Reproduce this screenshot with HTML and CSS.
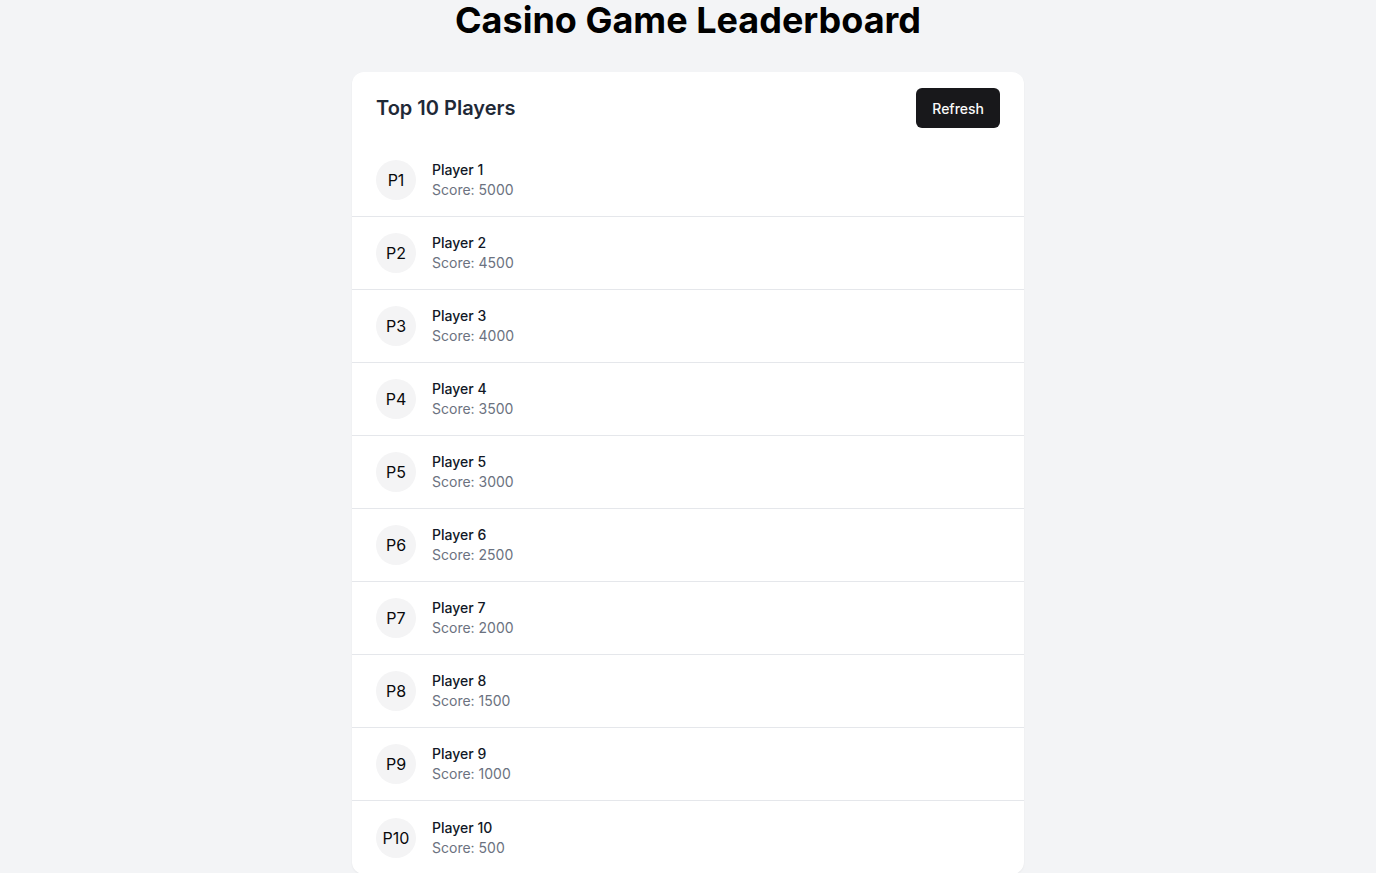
FILE: index.html
```html
<!DOCTYPE html>
<html lang="en">
<head>
<meta charset="utf-8">
<title>Casino Game Leaderboard</title>
<link rel="stylesheet" href="styles.css">
</head>
<body>
<main class="page">
  <h1 class="title">Casino Game Leaderboard</h1>
  <section class="card">
    <header class="card-header">
      <h2 class="card-title">Top 10 Players</h2>
      <button class="btn" type="button">Refresh</button>
    </header>
    <ul class="list">
      <li class="row"><span class="avatar">P1</span><div class="info"><span class="name">Player 1</span><span class="score">Score: 5000</span></div></li>
      <li class="row"><span class="avatar">P2</span><div class="info"><span class="name">Player 2</span><span class="score">Score: 4500</span></div></li>
      <li class="row"><span class="avatar">P3</span><div class="info"><span class="name">Player 3</span><span class="score">Score: 4000</span></div></li>
      <li class="row"><span class="avatar">P4</span><div class="info"><span class="name">Player 4</span><span class="score">Score: 3500</span></div></li>
      <li class="row"><span class="avatar">P5</span><div class="info"><span class="name">Player 5</span><span class="score">Score: 3000</span></div></li>
      <li class="row"><span class="avatar">P6</span><div class="info"><span class="name">Player 6</span><span class="score">Score: 2500</span></div></li>
      <li class="row"><span class="avatar">P7</span><div class="info"><span class="name">Player 7</span><span class="score">Score: 2000</span></div></li>
      <li class="row"><span class="avatar">P8</span><div class="info"><span class="name">Player 8</span><span class="score">Score: 1500</span></div></li>
      <li class="row"><span class="avatar">P9</span><div class="info"><span class="name">Player 9</span><span class="score">Score: 1000</span></div></li>
      <li class="row"><span class="avatar">P10</span><div class="info"><span class="name">Player 10</span><span class="score">Score: 500</span></div></li>
    </ul>
  </section>
</main>
</body>
</html>
```
FILE: styles.css
```css
* { box-sizing: border-box; }
html, body { margin: 0; padding: 0; }
body {
  background: #f3f4f6;
  font-family: Inter, "Noto Sans", sans-serif;
  color: #09090b;
}
.page {
  display: flex;
  flex-direction: column;
  align-items: center;
  padding-bottom: 32px;
}
.title {
  margin: 0 0 32px;
  font-size: 36px;
  line-height: 40px;
  font-weight: 700;
  color: #000;
}
.card {
  width: 672px;
  background: #fff;
  border-radius: 12px;
  box-shadow: 0 1px 2px rgba(0,0,0,0.05);
  overflow: hidden;
}
.card-header {
  display: flex;
  justify-content: space-between;
  align-items: center;
  padding: 16px 24px;
}
.card-title {
  margin: 0;
  font-size: 20px;
  line-height: 28px;
  font-weight: 600;
  color: #1f2937;
}
.btn {
  height: 40px;
  padding: 0 16px;
  border: 0;
  border-radius: 6px;
  background: #18181b;
  color: #fafafa;
  font-family: inherit;
  font-size: 14px;
  font-weight: 500;
}
.list { list-style: none; margin: 0; padding: 0; }
.row {
  display: flex;
  align-items: center;
  gap: 16px;
  height: 73px;
  padding: 16px 24px;
  border-bottom: 1px solid #e5e7eb;
}
.row:last-child { border-bottom: 0; }
.avatar {
  width: 40px;
  height: 40px;
  border-radius: 50%;
  background: #f4f4f5;
  display: flex;
  align-items: center;
  justify-content: center;
  font-size: 16px;
  color: #09090b;
  flex-shrink: 0;
}
.info { display: flex; flex-direction: column; }
.name { font-size: 14px; line-height: 20px; font-weight: 500; color: #111827; }
.score { font-size: 14px; line-height: 20px; color: #6b7280; }
```
